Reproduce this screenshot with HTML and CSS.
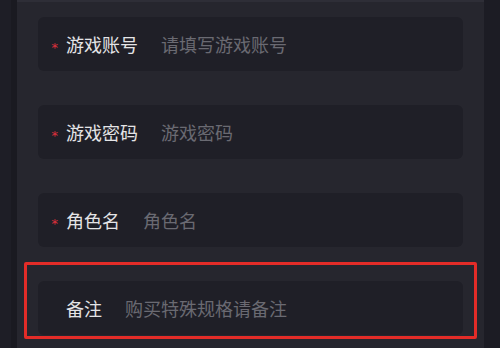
FILE: index.html
```html
<!DOCTYPE html>
<html lang="zh-CN">
<head>
<meta charset="utf-8">
<link rel="stylesheet" href="styles.css">
</head>
<body>
<div class="screen">
  <div class="side-left"><div class="side-edge"></div></div>
  <div class="panel">
    <div class="field">
      <span class="star">*</span>
      <span class="label">游戏账号</span>
      <span class="placeholder">请填写游戏账号</span>
    </div>
    <div class="field">
      <span class="star">*</span>
      <span class="label">游戏密码</span>
      <span class="placeholder">游戏密码</span>
    </div>
    <div class="field">
      <span class="star">*</span>
      <span class="label">角色名</span>
      <span class="placeholder">角色名</span>
    </div>
    <div class="field marked">
      <span class="star"></span>
      <span class="label">备注</span>
      <span class="placeholder">购买特殊规格请备注</span>
      <div class="highlight"></div>
    </div>
  </div>
  <div class="side-right"></div>
</div>
</body>
</html>
```
FILE: styles.css
```css
html, body {
  margin: 0;
  padding: 0;
  background: #26262e;
}
body {
  font-family: "Noto Sans CJK SC", "Noto Sans", sans-serif;
}
.screen {
  display: flex;
  width: 500px;
  height: 348px;
  overflow: hidden;
}
.side-left {
  width: 17px;
  background: #1e1e26;
  display: flex;
  justify-content: flex-end;
}
.side-edge {
  width: 6px;
  background: #1a1a21;
}
.side-right {
  width: 16px;
  background: #1c1c24;
}
.panel {
  flex: 1;
  background: #26262e;
  border-top: 2px solid #2e2e37;
  padding: 15px 21px 0 21px;
  display: flex;
  flex-direction: column;
  gap: 34px;
}
.field {
  position: relative;
  height: 54px;
  flex-shrink: 0;
  background: #1f1f27;
  border-radius: 6px;
  display: flex;
  align-items: center;
  font-size: 18px;
  line-height: 1;
}
.star {
  width: 28px;
  box-sizing: border-box;
  padding-right: 8px;
  text-align: right;
  color: #e0303c;
  font-family: "DejaVu Sans", sans-serif;
  font-size: 13px;
  position: relative;
  top: 3px;
}
.label {
  color: #e4e4e6;
}
.placeholder {
  margin-left: 23px;
  color: #6a6a72;
}
.highlight {
  position: absolute;
  left: -14px;
  right: -14px;
  top: -19px;
  bottom: -4px;
  border: 3px solid #e32c28;
  border-radius: 2px;
}
```
